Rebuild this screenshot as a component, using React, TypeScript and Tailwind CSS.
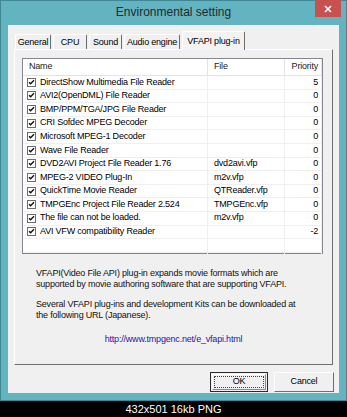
import React from "react";

const rows: [string, string, string][] = [
  ["DirectShow Multimedia File Reader", "", "5"],
  ["AVI2(OpenDML) File Reader", "", "0"],
  ["BMP/PPM/TGA/JPG File Reader", "", "0"],
  ["CRI Sofdec MPEG Decoder", "", "0"],
  ["Microsoft MPEG-1 Decoder", "", "0"],
  ["Wave File Reader", "", "0"],
  ["DVD2AVI Project File Reader 1.76", "dvd2avi.vfp", "0"],
  ["MPEG-2 VIDEO Plug-In", "m2v.vfp", "0"],
  ["QuickTime Movie Reader", "QTReader.vfp", "0"],
  ["TMPGEnc Project File Reader 2.524", "TMPGEnc.vfp", "0"],
  ["The file can not be loaded.", "m2v.vfp", "0"],
  ["AVI VFW compatibility Reader", "", "-2"],
];

function Check() {
  return (
    <svg width="9" height="9" viewBox="0 0 9 9" className="shrink-0">
      <rect x="0.5" y="0.5" width="8" height="8" fill="#fff" stroke="#6d6d6d" />
      <path d="M2 4.2 L3.6 5.8 L7 2.3" fill="none" stroke="#111" strokeWidth="1.4" />
    </svg>
  );
}

function Tab({ label, w, selected }: { label: string; w: string; selected?: boolean }) {
  return (
    <div
      className={
        "flex items-center justify-center border-l border-t border-r border-l-white border-t-white border-r-[#6e6e6e] rounded-t-[2px] " +
        w +
        (selected ? " h-[19px] bg-[#f3f3f3] relative z-10 -mb-px" : " h-[15px] bg-[#f0f0f0]")
      }
    >
      <span className="leading-none">{label}</span>
    </div>
  );
}

export default function App() {
  return (
    <div
      className="w-[347px] h-[417px] bg-black flex flex-col text-[9px] tracking-[-0.2px] text-black"
      style={{ fontFamily: '"Liberation Sans", Arial, sans-serif' }}
    >
      <div className="h-[401px] border border-[#3f8793] bg-[#64b3c0] flex flex-col px-[7px] pb-[7px]">
        <div className="h-[24px] relative flex items-center justify-center">
          <span className="text-[12px] tracking-normal text-[#1e2a2c] -mt-[2px]">Environmental setting</span>
          <div className="absolute right-[-2px] top-[-1px] w-[26px] h-[17px] bg-[#c75050] flex items-center justify-center">
            <svg width="8" height="8" viewBox="0 0 8 8">
              <path d="M1 1 L7 7 M7 1 L1 7" stroke="#fff" strokeWidth="1.6" />
            </svg>
          </div>
        </div>
        <div className="flex-1 bg-[#f0f0f0] flex flex-col pt-[6px]">
          <div className="flex items-end h-[18px] pl-[7px] gap-[2px]">
            <Tab label="General" w="w-[36px]" />
            <Tab label="CPU" w="w-[34px]" />
            <Tab label="Sound" w="w-[33px]" />
            <Tab label="Audio engine" w="w-[56px]" />
            <Tab label="VFAPI plug-in" w="w-[63px]" selected />
          </div>
          <div className="mx-[6px] h-[316px] border border-l-white border-t-white border-r-[#6e6e6e] border-b-[#6e6e6e] bg-[#f0f0f0] flex flex-col pt-[8px]">
            <div className="ml-[7px] w-[301px] h-[196px] border border-[#828790] bg-white flex flex-col">
              <div className="flex h-[17px] border-b border-[#e3e3e3] text-[#222] shrink-0">
                <div className="w-[185px] pl-[6px] flex items-center border-r border-[#e3e3e3]">Name</div>
                <div className="w-[77px] pl-[6px] flex items-center border-r border-[#e3e3e3]">File</div>
                <div className="w-[37px] pr-[3px] flex items-center justify-end border-r border-[#e3e3e3]">Priority</div>
              </div>
              {rows.map(([name, file, pri]) => (
                <div key={name} className="flex h-[13.6px] border-b border-[#efefef] shrink-0">
                  <div className="w-[185px] pl-[4px] flex items-center gap-[4px] border-r border-[#efefef] overflow-hidden whitespace-nowrap">
                    <Check />
                    <span>{name}</span>
                  </div>
                  <div className="w-[77px] pl-[6px] flex items-center border-r border-[#efefef] whitespace-nowrap">{file}</div>
                  <div className="w-[37px] pr-[3px] flex items-center justify-end border-r border-[#efefef]">{pri}</div>
                </div>
              ))}
              <div className="flex h-[13.6px] border-b border-[#efefef] shrink-0">
                <div className="w-[185px] border-r border-[#efefef]" />
                <div className="w-[77px] border-r border-[#efefef]" />
                <div className="w-[37px] border-r border-[#efefef]" />
              </div>
              <div className="flex flex-1">
                <div className="w-[185px] border-r border-[#efefef]" />
                <div className="w-[77px] border-r border-[#efefef]" />
                <div className="w-[37px] border-r border-[#efefef]" />
              </div>
            </div>
            <div className="pl-[21px] mt-[14px] leading-[11px] text-[#111]">
              <p>VFAPI(Video File API) plug-in expands movie formats which are</p>
              <p>supported by movie authoring software that are supporting VFAPI.</p>
              <p className="mt-[9px]">Several VFAPI plug-ins and development Kits can be downloaded at</p>
              <p>the following URL (Japanese).</p>
            </div>
            <p className="mt-[13px] text-center leading-[11px] text-[#1a1aa6]">http://www.tmpgenc.net/e_vfapi.html</p>
          </div>
          <div className="flex justify-end gap-[6px] mt-[7px] mr-[5px]">
            <div className="w-[58px] h-[20px] border border-[#2a2a2a] bg-[#f0f0f0] flex p-px">
              <div className="flex-1 border border-l-white border-t-white border-r-[#8a8a8a] border-b-[#8a8a8a] flex p-[1px]">
                <div className="flex-1 border border-dotted border-[#444] flex items-center justify-center">OK</div>
              </div>
            </div>
            <div className="w-[60px] h-[20px] border border-l-[#fdfdfd] border-t-[#fdfdfd] border-r-[#6e6e6e] border-b-[#6e6e6e] bg-[#f0f0f0] flex items-center justify-center">
              Cancel
            </div>
          </div>
        </div>
      </div>
      <div className="flex-1 flex items-center justify-center text-white text-[11px] tracking-normal">
        432x501 16kb PNG
      </div>
    </div>
  );
}
